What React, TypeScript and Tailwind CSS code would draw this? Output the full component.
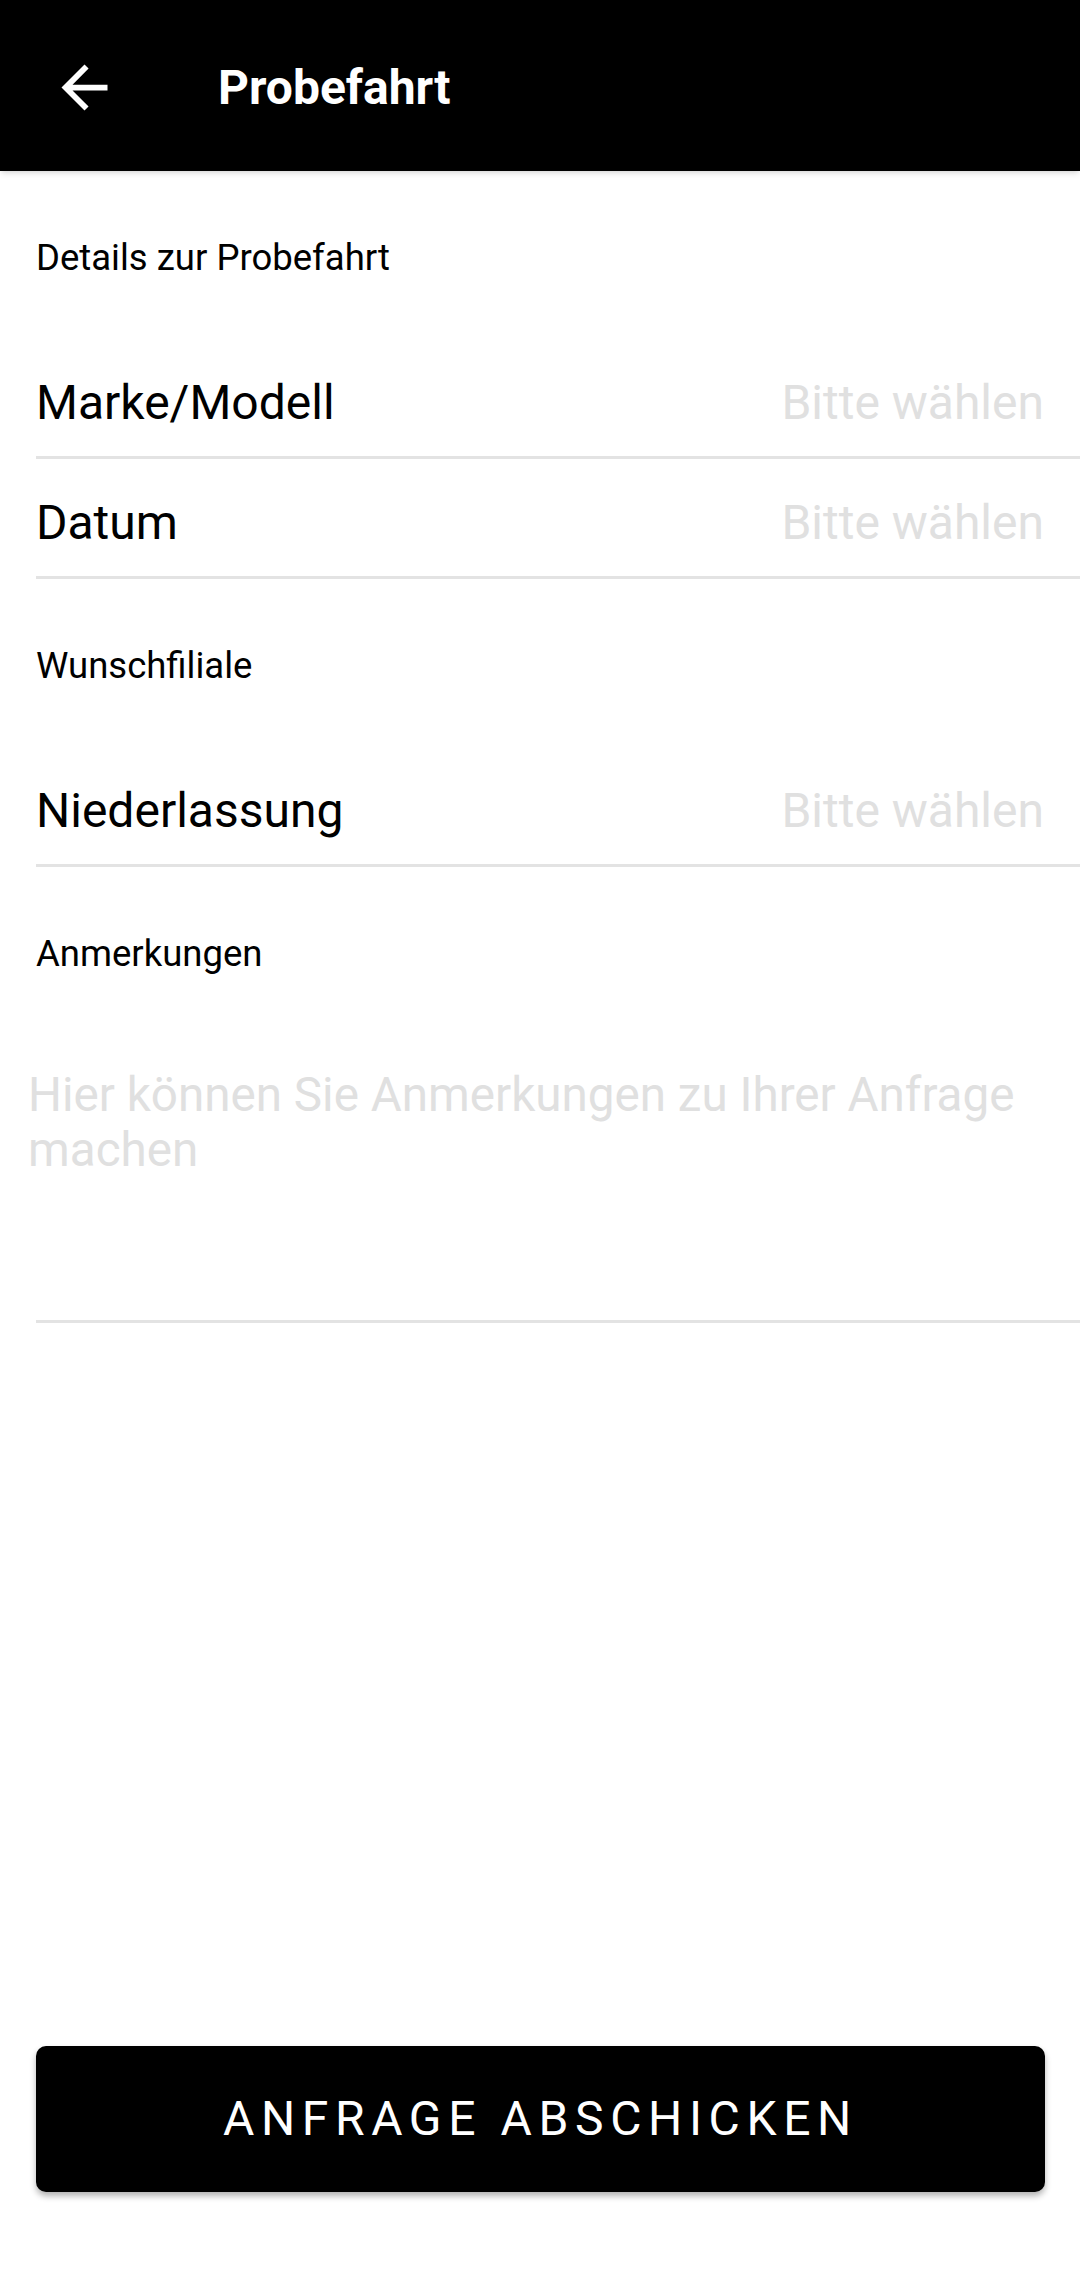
import React from "react";

interface FieldRowProps {
  label: string;
  value?: string;
}

const Divider: React.FC = () => <div className="h-[3px] bg-[#e3e3e3]" />;

const SectionLabel: React.FC<{ text: string }> = ({ text }) => (
  <div className="pt-[65px] pb-[59px]">
    <div className="text-[36.5px] leading-[44px] text-black">{text}</div>
  </div>
);

const FieldRow: React.FC<FieldRowProps> = ({ label, value = "Bitte wählen" }) => (
  <>
    <div className="h-[117px] pt-[10px] pr-[36px] flex items-center justify-between">
      <span className="text-[48px] leading-[56px] text-black">{label}</span>
      <span className="text-[48px] leading-[56px] text-[#e0e0e0]">{value}</span>
    </div>
    <Divider />
  </>
);

const App: React.FC = () => {
  return (
    <div className="min-h-[2270px] w-[1080px] flex flex-col bg-white font-['Roboto',sans-serif]">
      <header className="h-[171px] pt-[4px] bg-black flex items-center pl-[50px] shadow-md relative z-10">
        <svg width="69" height="69" viewBox="0 0 24 24" fill="#ffffff">
          <path d="M20 11H7.83l5.59-5.59L12 4l-8 8 8 8 1.41-1.41L7.83 13H20v-2z" />
        </svg>
        <h1 className="ml-[99px] text-[48px] leading-[60px] font-bold text-white">Probefahrt</h1>
      </header>

      <main className="pl-[36px]">
        <SectionLabel text="Details zur Probefahrt" />
        <FieldRow label="Marke/Modell" />
        <FieldRow label="Datum" />

        <SectionLabel text="Wunschfiliale" />
        <FieldRow label="Niederlassung" />

        <SectionLabel text="Anmerkungen" />
        <div className="pt-[33px] pb-[142px] -ml-[8px] pr-[36px]">
          <div className="text-[47.6px] leading-[55px] text-[#e0e0e0]">
            Hier können Sie Anmerkungen zu Ihrer Anfrage machen
          </div>
        </div>
        <Divider />
      </main>

      <div className="flex-1" />

      <div className="pr-[35px] pb-[78px] pl-[36px]">
        <button className="w-full h-[146px] rounded-[10px] bg-black shadow-[0_4px_6px_rgba(0,0,0,0.3)] flex items-center justify-center">
          <span className="text-[48px] leading-[56px] tracking-[0.138em] text-white">
            ANFRAGE ABSCHICKEN
          </span>
        </button>
      </div>
    </div>
  );
};

export default App;
